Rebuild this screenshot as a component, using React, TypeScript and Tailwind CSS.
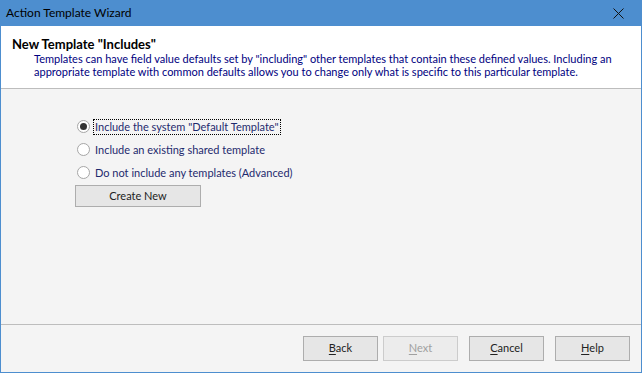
import React from 'react';

const font = { fontFamily: 'Lato, "Noto Sans", sans-serif' };

function Radio({ checked, label, focused }: { checked?: boolean; label: string; focused?: boolean }) {
  return (
    <div className="flex items-center h-[23px]">
      <span className="w-[13px] h-[13px] rounded-full border border-[#a6a6a6] bg-white flex items-center justify-center ml-[2px]">
        {checked && <span className="w-[7px] h-[7px] rounded-full bg-[#333]" />}
      </span>
      <span className={`ml-[4px] px-[1px] leading-[14px] ${focused ? 'outline outline-1 outline-dotted outline-black' : ''}`}>
        {label}
      </span>
    </div>
  );
}

function WizButton({ label, u, disabled }: { label: string; u: string; disabled?: boolean }) {
  const rest = label.slice(1);
  return (
    <button
      className={`w-[75px] h-[25px] border bg-[#e6e6e6] text-[11px] ${disabled ? 'border-[#cccccc] text-[#a0a0a0] bg-[#ececec]' : 'border-[#adadad] text-[#222]'}`}
    >
      <span className="underline underline-offset-2">{u}</span>
      {rest}
    </button>
  );
}

export default function App() {
  return (
    <div className="w-[642px] h-[373px] flex flex-col bg-[#4d8ecf] text-[11px] text-[#1a1a1a]" style={font}>
      <div className="h-[26px] flex items-center justify-between pl-[6px] pr-[18px] text-black text-[12px]">
        <span>Action Template Wizard</span>
        <svg width="11" height="11" viewBox="0 0 11 11">
          <path d="M0.5 0.5 L10.5 10.5 M10.5 0.5 L0.5 10.5" stroke="#111" strokeWidth="1" />
        </svg>
      </div>
      <div className="flex-1 mx-[1px] mb-[1px] flex flex-col bg-[#f4f4f4]">
        <div className="h-[63px] bg-white border-b border-[#bdbdbd] pt-[11px] pl-[11px] pr-2">
          <div className="font-bold text-black text-[13px] leading-[15px]">New Template "Includes"</div>
          <div className="pl-[22px] text-[#000080] leading-[13px]">
            Templates can have field value defaults set by "including" other templates that contain these defined values. Including an appropriate template with common defaults allows you to change only what is specific to this particular template.
          </div>
        </div>
        <div className="flex-1 pl-[74px] pt-[26px] text-[#1e2a6e]">
          <Radio checked focused label={'Include the system "Default Template"'} />
          <Radio label="Include an existing shared template" />
          <Radio label="Do not include any templates (Advanced)" />
          <button className="mt-[1px] w-[126px] h-[22px] border border-[#adadad] bg-[#e6e6e6] text-[#222] text-[11px]">
            Create New
          </button>
        </div>
        <div className="h-[48px] border-t border-[#bdbdbd] flex items-start justify-end pt-[11px] pr-[11px]">
          <div className="flex">
            <WizButton label="Back" u="B" />
            <div className="ml-[5px]">
              <WizButton label="Next" u="N" disabled />
            </div>
            <div className="ml-[11px]">
              <WizButton label="Cancel" u="C" />
            </div>
            <div className="ml-[11px]">
              <WizButton label="Help" u="H" />
            </div>
          </div>
        </div>
      </div>
    </div>
  );
}
